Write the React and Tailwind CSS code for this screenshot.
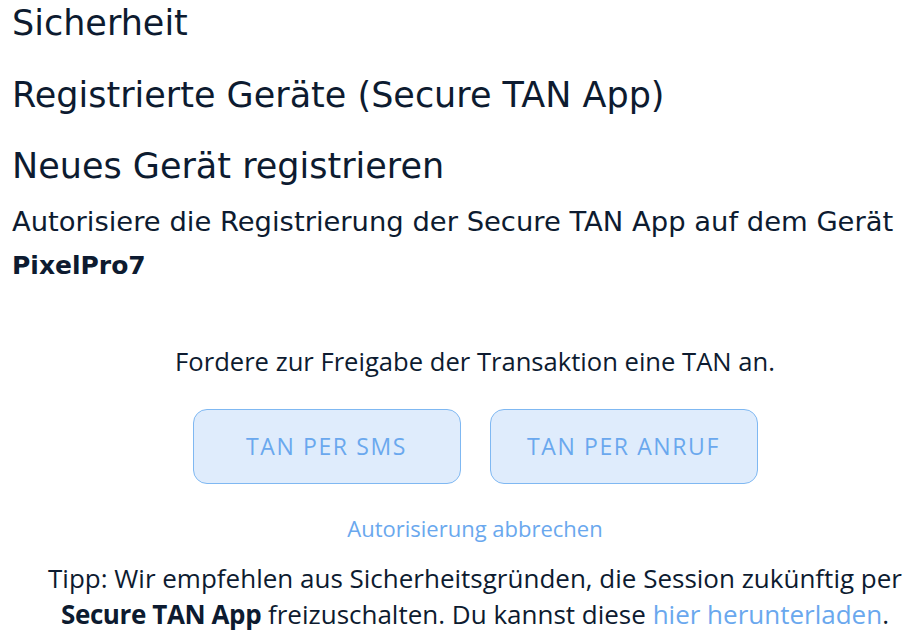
import React from 'react'

const heading = "font-['DejaVu_Sans',sans-serif] text-[#0d1b30]"
const plex = "font-['Open_Sans',sans-serif]"

function TanButton({ label }) {
  return (
    <button className={`${plex} w-[268px] h-[75px] rounded-[14px] border border-[#7fb8f2] bg-[#dfecfc] text-[#6aa8ee] text-[23px] tracking-[1.6px]`}>
      {label}
    </button>
  )
}

export default function App() {
  return (
    <div className="w-[921px] h-[642px] overflow-hidden bg-white">
      <div className="w-[938px] pl-3">
        <h1 className={`${heading} text-[35px] leading-[44px] pt-[1px]`}>Sicherheit</h1>
        <h2 className={`${heading} text-[35px] leading-[44px] mt-[28px]`}>Registrierte Geräte (Secure TAN App)</h2>
        <h3 className={`${heading} text-[35px] leading-[44px] mt-[27px]`}>Neues Gerät registrieren</h3>
        <p className={`${heading} text-[27.4px] leading-[43px] mt-[12px]`}>
          Autorisiere die Registrierung der Secure TAN App auf dem Gerät
          <br />
          <span className="font-bold text-[25px]">PixelPro7</span>
        </p>

        <div className="flex flex-col items-center mt-[57px]">
          <p className={`${plex} text-[25.6px] leading-[36px] text-[#0d1b30]`}>Fordere zur Freigabe der Transaktion eine TAN an.</p>
          <div className="flex gap-[29px] mt-[29px]">
            <TanButton label="TAN PER SMS" />
            <TanButton label="TAN PER ANRUF" />
          </div>
          <a href="#" className={`${plex} text-[22px] leading-[30px] text-[#6aa8ee] mt-[29px]`}>Autorisierung abbrechen</a>
          <p className={`${plex} text-[26px] leading-[36px] text-[#0d1b30] text-center mt-[17px]`}>
            Tipp: Wir empfehlen aus Sicherheitsgründen, die Session zukünftig per
            <br />
            <span className="font-bold tracking-[-0.4px]">Secure TAN App</span> freizuschalten. Du kannst diese{' '}
            <a href="#" className="text-[#6aa8ee]">hier herunterladen</a>.
          </p>
        </div>
      </div>
    </div>
  )
}
